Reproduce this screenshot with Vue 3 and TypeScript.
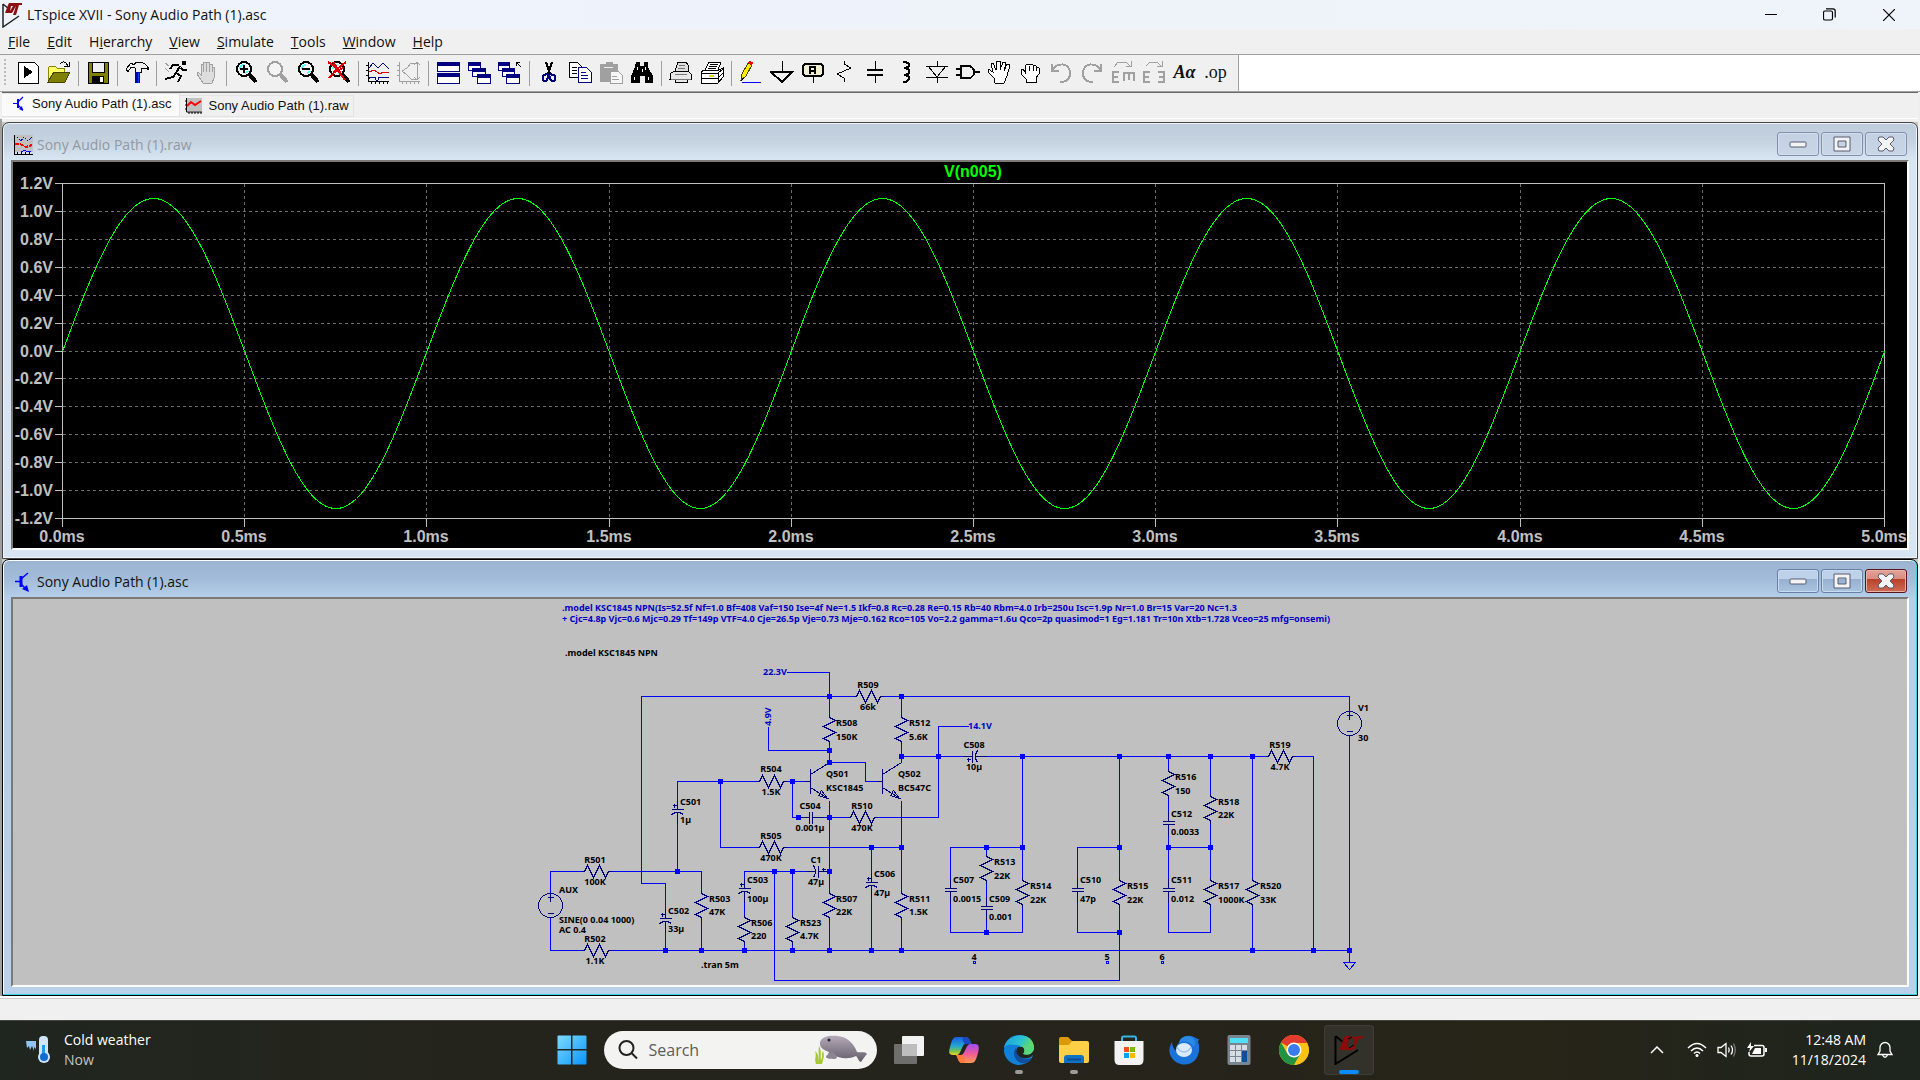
<script setup lang="ts">
interface Part { d: string; s?: string; f?: string; w?: number }
interface Tool { name: string; parts: Part[]; sep?: boolean }

const K = '#000'
const G = '#a0a0a0'
const N = '#000080'

const fistPath = 'M8 22 V19 L3 14 V10 L5 9 L7 12 V6 L9 4 L11 5 L13 4 L15 5 L17 5 L19 7 L21 8 V14 L18 18 V22 Z'
const lens = (c: string): Part[] => [
  { d: 'M3 9 a7 7 0 1 1 14 0 a7 7 0 1 1 -14 0', s: c, f: '#f4f4f4', w: 2 },
  { d: 'M15 14 L22 22', s: c, w: 4 },
]
const cyan: Part = { d: 'M6 9 A4 4 0 0 1 10 5 M14 11 A4 4 0 0 1 11 13', s: '#5ff', w: 2 }
const frameBox = (x: number, y: number, w: number, h: number): Part[] => [
  { d: `M${x} ${y} h${w} v${h} h-${w} Z`, s: N, f: '#fff' },
  { d: `M${x} ${y} h${w} v3 h-${w} Z`, s: N, f: N },
]
const cascade = [...frameBox(1, 2, 12, 8), ...frameBox(5, 8, 13, 8), ...frameBox(10, 14, 13, 9)]

const tools: Tool[] = [
  { name: 'New schematic', parts: [{ d: 'M2 2 h16 l4 4 v17 h-20 Z', s: K, f: '#fff' }, { d: 'M8 6 L17 12 L8 18 Z', f: K }] },
  { name: 'Open', parts: [{ d: 'M1 21 V8 L3 6 H8 L10 8 H17 V12 H7 Z', s: '#880', f: '#ff6' }, { d: 'M1 22 L7 12 H23 L18 22 Z', s: '#440', f: '#808000' }, { d: 'M13 4 C16 0 19 2 21 6 M17 6 H22 V2', s: K }] },
  { name: 'Save', sep: true, parts: [{ d: 'M2 2 H22 V23 H2 Z', s: K, f: '#808000' }, { d: 'M6 2 H18 V12 H6 Z', s: K, f: '#f0f0f0' }, { d: 'M6 16 H18 V23 H6 Z', f: K }, { d: 'M14 17 h3 v5 h-3 Z', f: '#fff' }] },
  { name: 'Control panel', sep: true, parts: [{ d: 'M1 9 L6 3 L9 5 L11 2 L15 2 C20 3 23 6 24 10 L21 8 L16 8 V12 H10 V8 L6 7 L3 12 Z', s: K, f: '#eee' }, { d: 'M10 12 H15 V23 H10 Z', f: '#0000a8' }, { d: 'M13 13 V23', s: '#04f' }] },
  { name: 'Run', sep: true, parts: [{ d: 'M18 1 h4 v4 h-4 Z', f: K }, { d: 'M16 6 L12 13 L17 16 L14 22', s: K, w: 2 }, { d: 'M15 5 L9 5 L6 9 M17 8 L19 10 L23 10 M12 13 L9 17 L1 19', s: K, w: 2 }, { d: 'M1 3 L5 6 M1 8 L5 12', s: G }] },
  { name: 'Halt', parts: [{ d: 'M8 23 L2 14 L3 12 L6 15 V4 L8 4 V11 V2 L11 2 V11 V2 L14 2 V11 V4 L17 4 V12 V7 L19 7 V18 L17 23 Z', s: G, f: '#ddd' }, { d: 'M8 4 V12 M11 2 V12 M14 3 V12', s: G }] },
  { name: 'Zoom area', sep: true, parts: [...lens(K), cyan, { d: 'M6 9 H14 M10 5 V13', s: K, w: 2 }] },
  { name: 'Pan', parts: [...lens(G)] },
  { name: 'Zoom back', parts: [...lens(K), cyan, { d: 'M6 9 H14', s: K, w: 2 }] },
  { name: 'Zoom full extents', parts: [...lens(K), cyan, { d: 'M1 2 L7 6 L18 20 M19 2 L10 9 L2 18 M6 2 L14 14 M16 8 L6 13', s: '#e00000', w: 2 }] },
  { name: 'Autorange', sep: true, parts: [{ d: 'M2 2 V21 H23 M5 21 V24 M9 21 V24 M13 21 V24 M17 21 V24 M21 21 V24 M0 5 H2 M0 10 H2 M0 15 H2', s: K }, { d: 'M3 8 L7 3 L12 8 L17 3 L23 9', s: N }, { d: 'M3 12 L8 10 L14 14 L17 12 L23 13', s: '#e00000' }, { d: 'M3 19 V17 H9 L10 20 H12 L13 17 H23', s: N }] },
  { name: 'Mark data', parts: [{ d: 'M2 2 V21 H23 M5 21 V24 M9 21 V24 M13 21 V24 M17 21 V24 M21 21 V24 M0 5 H2 M0 10 H2 M0 15 H2', s: G }, { d: 'M14 3 H20 M10 8 L14 3 M5 11 L10 8 M5 11 L10 15 M10 15 L14 19 H20 M20 2 V20 M17 5 L20 2 L23 5 M17 17 L20 20 L23 17', s: G }] },
  { name: 'Tile windows', sep: true, parts: [...frameBox(1, 2, 22, 9), ...frameBox(1, 13, 22, 10)] },
  { name: 'Cascade windows', parts: cascade },
  { name: 'Close windows', parts: [...frameBox(0, 2, 11, 8), ...frameBox(4, 8, 12, 8), ...frameBox(8, 14, 13, 9), { d: 'M23 7 L18 2 M18 6 V2 H22', s: K }] },
  { name: 'Cut', sep: true, parts: [{ d: 'M9 2 L13 14 M15 2 L11 14', s: K, w: 2 }, { d: 'M11 13 L8 15 C5 15 5 21 8 21 C11 21 11 18 11 14 M13 14 L16 15 C19 15 19 21 16 21 C13 21 13 18 12 14', s: N, w: 2 }] },
  { name: 'Copy', parts: [{ d: 'M1 2 H9 L13 6 V17 H1 Z', s: K, f: '#fff' }, { d: 'M4 7 H9 M4 10 H9 M4 13 H9', s: K }, { d: 'M10 7 H18 L23 12 V22 H10 Z', s: N, f: '#fff' }, { d: 'M13 12 H18 M13 15 H20 M13 18 H20', s: N }] },
  { name: 'Paste', parts: [{ d: 'M1 4 H7 V2 H13 V4 H18 V21 H1 Z', s: G, f: G }, { d: 'M5 7 H14', s: '#eee' }, { d: 'M11 11 H19 L23 15 V23 H11 Z', s: G, f: '#f6f6f6' }, { d: 'M13 16 H18 M13 19 H20', s: G }] },
  { name: 'Find', parts: [{ d: 'M6 2 h4 v4 h4 v-4 h4 v5 L23 16 V23 H15 V16 H10 V23 H1 V16 L5 7 Z', f: K }, { d: 'M7 7 V10 M15 7 V10 M4 17 V20 M18 17 V20 M12 9 V12', s: '#fff' }] },
  { name: 'Print preview', sep: true, parts: [{ d: 'M6 11 L9 2 H17 L19 5 V11', s: K, f: '#ddd' }, { d: 'M2 13 L6 11 H19 L22 14 V19 H18 V22 H6 V19 H1 Z', s: K, f: '#e8e8e8' }, { d: 'M2 19 H22 M10 5 H16 M9 8 H16 M6 14 H18', s: '#777' }] },
  { name: 'Print', parts: [{ d: 'M5 10 L9 2 H21 L18 10', s: K, f: '#fff' }, { d: 'M10 4 H18 M9 6 H17 M8 8 H16', s: K }, { d: 'M1 12 L4 10 H19 L23 8 V17 L18 23 H1 Z', s: K, f: '#fff' }, { d: 'M1 13 H18 V23 M18 13 L23 9 M1 18 H18 L23 13', s: K }, { d: 'M9 16 H14', s: '#dd0', w: 2 }] },
  { name: 'Draw wire', sep: true, parts: [{ d: 'M2 20 L3 14 L9 3 L13 5 L7 16 Z', s: '#440', f: '#ffee00' }, { d: 'M9 3 L10 1 L14 2 L13 6 Z', f: '#f00' }, { d: 'M2 22 L3 18 L5 18 Z', f: K }, { d: 'M3 22 H22', s: '#00f' }] },
  { name: 'Ground', parts: [{ d: 'M12 1 V12', s: K }, { d: 'M1 12 H22 L12 22 Z', s: K, w: 2 }] },
  { name: 'Label net', parts: [{ d: 'M4 4 H20 L22 6 V14 L20 16 H4 L2 14 V6 Z', s: K, f: '#f0f0d0', w: 2 }, { d: 'M9 14 V7 H14 V14 M9 11 H14', s: K, w: 2 }, { d: 'M12 17 V23', s: K }] },
  { name: 'Resistor', parts: [{ d: 'M12 1 V4 L19 8 L5 14 L12 18 V22', s: K }] },
  { name: 'Capacitor', parts: [{ d: 'M12 1 V9 M12 15 V23', s: K }, { d: 'M4 10 H20 M4 15 H20', s: K, w: 2 }] },
  { name: 'Inductor', parts: [{ d: 'M9 2 H12 L15 4 V6 L12 8 H10 M12 8 L15 10 V13 L12 15 H10 M12 15 L15 17 V19 L12 22 H9', s: K, w: 2 }] },
  { name: 'Diode', parts: [{ d: 'M12 1 V6 M1 6 H23 M3 6 L12 17 L21 6 M1 17 H23 M12 17 V23', s: K }] },
  { name: 'Component', parts: [{ d: 'M5 6 H12 C20 6 20 18 12 18 H5 Z M0 9 H5 M0 15 H5 M18 12 H24', s: K, w: 2 }] },
  { name: 'Move', parts: [{ d: 'M8 23 L7 18 L1 12 L1 9 L6 12 L4 4 L6 3 L9 10 L10 1 L13 1 L13 10 L16 2 L19 3 L17 11 L20 4 L23 5 L20 16 L17 23 Z', s: K, f: '#fff' }] },
  { name: 'Drag', parts: [{ d: fistPath, s: K, f: '#fff' }, { d: 'M11 6 V11 M15 6 V11 M18 7 V11', s: K }] },
  { name: 'Undo', parts: [{ d: 'M3 4 V11 H10 M3 11 C7 2 21 2 21 13 C21 19 17 22 11 22', s: G, w: 2 }] },
  { name: 'Redo', parts: [{ d: 'M21 4 V11 H14 M21 11 C17 2 3 2 3 13 C3 19 7 22 13 22', s: G, w: 2 }] },
  { name: 'Rotate', parts: [{ d: 'M3 7 L7 2 H15 L19 6 M15 6 H20 V1', s: G }, { d: 'M8 12 H2 V22 H8 M2 17 H7 M13 21 V13 H23 V21 M18 13 V20', s: G, w: 2 }] },
  { name: 'Mirror', parts: [{ d: 'M4 6 L8 2 H15 L19 6 M15 6 H20 V1', s: G }, { d: 'M8 12 H2 V22 H8 M2 17 H7 M16 12 H22 V22 H16 M22 17 H17', s: G, w: 2 }] },
  { name: 'Text', parts: [] },
  { name: 'SPICE directive', parts: [] },
]
const glyph: Record<string, string> = { Text: 'Aα', 'SPICE directive': '.op' }

const menus: [string, string, string][] = [
  ['', 'F', 'ile'], ['', 'E', 'dit'], ['H', 'i', 'erarchy'], ['', 'V', 'iew'],
  ['', 'S', 'imulate'], ['', 'T', 'ools'], ['', 'W', 'indow'], ['', 'H', 'elp'],
]

/* waveform pane */
const X0 = 62, X1 = 1884, Y0 = 183, Y1 = 518
const volts = Array.from({ length: 13 }, (_, i) => ({
  y: Math.round(Y0 + (i * (Y1 - Y0)) / 12),
  text: (1.2 - i * 0.2).toFixed(1).replace('-0.0', '0.0') + 'V',
}))
const times = Array.from({ length: 11 }, (_, i) => ({
  x: Math.round(X0 + (i * (X1 - X0)) / 10),
  text: (i * 0.5).toFixed(1) + 'ms',
}))
const trace = Array.from({ length: 912 }, (_, i) => {
  const a = (i / 911) * 10 * Math.PI
  const y = 351 - 155 * Math.sin(a) + (1 - Math.cos(2 * a))
  return `${(X0 + (i / 911) * (X1 - X0)).toFixed(1)},${y.toFixed(1)}`
}).join(' ')

/* schematic */
const wires = [
  'M786 672 H829 V714 M829 744 V762', 'M853 696 H641 V883 H665 V908', 'M883 696 H1349 V711',
  'M901 696 V714 M901 744 V762', 'M768 726 V750 H829', 'M829 762 H865 V781 H877',
  'M901 756 H962 M986 756 H1265', 'M968 726 H938 V817 H877', 'M829 817 H847 M823 817 H829',
  'M792 781 V817 H798', 'M829 800 V890 M829 920 V950', 'M901 800 V890 M901 920 V950',
  'M677 799 V781 H756 M677 823 V871', 'M786 781 H804', 'M720 781 V847 H756 M786 847 H901',
  'M550 893 V871 H581 M611 871 H701 V890 M701 920 V950', 'M550 917 V950 H581 M611 950 H1349',
  'M805 871 H744 V878 M744 902 V914 M744 944 V950', 'M871 847 V872 M871 896 V950', 'M665 932 V950',
  'M774 871 V980 H1119 V907', 'M792 871 V914 M792 944 V950', 'M1022 756 V877 M1022 907 V932 H950 V902',
  'M1022 847 H950 V878', 'M986 847 V853 M986 883 V896 M986 920 V932', 'M1119 847 H1077 V878 M1077 902 V932 H1119',
  'M1119 756 V877', 'M1168 756 V768 M1168 798 V811 M1168 835 V878 M1168 902 V932 H1210 V907',
  'M1168 847 H1210', 'M1210 756 V793 M1210 823 V877', 'M1252 756 V877 M1252 907 V950',
  'M1295 756 H1313 V950', 'M1349 735 V962', 'M1343 962 H1355 L1349 969 Z',
].join(' ')

const resV = ([x, y]: number[]) => `M${x} ${y} v3 l6 3 l-12 6 l12 6 l-12 6 l6 3 v3`
const resH = ([x, y]: number[]) => `M${x} ${y} h3 l3 -6 l6 12 l6 -12 l6 12 l3 -6 h3`
const capV = ([x, y]: number[]) => `M${x} ${y - 12} V${y - 2} M${x - 6} ${y - 2} h12 M${x - 6} ${y + 1} h12 M${x} ${y + 1} V${y + 12}`
const polV = ([x, y]: number[]) => `M${x} ${y - 12} V${y - 2} M${x - 6} ${y - 2} h12 M${x - 6} ${y + 3} q6 -4 12 0 M${x} ${y + 1} V${y + 12} M${x - 5} ${y - 6} h4 M${x - 3} ${y - 8} v4`
const npn = ([x, y]: number[]) => `M${x - 25} ${y} h6 M${x - 19} ${y - 13} v25 M${x - 19} ${y - 7} L${x} ${y - 19} M${x - 19} ${y + 6} L${x} ${y + 18} M${x - 8} ${y + 9} L${x - 2} ${y + 17} L${x - 11} ${y + 14} Z`
const source = ([x, y]: number[]) => `M${x - 12} ${y} a12 12 0 1 1 24 0 a12 12 0 1 1 -24 0 M${x - 3} ${y - 8} h6 M${x} ${y - 12} v8 M${x - 3} ${y + 8} h6`

const symbols = [
  ...[[829, 714], [901, 714], [701, 890], [829, 890], [901, 890], [744, 914], [792, 914], [1168, 768], [1210, 793], [986, 853], [1022, 877], [1119, 877], [1210, 877], [1252, 877]].map(resV),
  ...[[853, 696], [756, 781], [847, 817], [756, 847], [581, 871], [581, 950], [1265, 756]].map(resH),
  ...[[1168, 823], [950, 890], [986, 908], [1077, 890], [1168, 890]].map(capV),
  ...[[677, 811], [665, 920], [744, 890], [871, 884]].map(polV),
  ...[[829, 781], [901, 781]].map(npn),
  ...[[550, 905], [1349, 723]].map(source),
  'M798 817 H809 M809 811 v12 M812 811 v12 M812 817 H823',
  'M805 871 H815 M813 865 q4 6 0 12 M818 865 v12 M818 871 H829 M821 869 h4 M823 867 v4',
  'M962 756 H972 M972 750 v12 M977 750 q-4 6 0 12 M975 756 H986 M966 759 h4 M968 757 v4',
].join(' ')

const joints = [
  [829, 696], [901, 696], [829, 750], [829, 762], [901, 756], [938, 756], [720, 781], [792, 781], [798, 817], [829, 817],
  [871, 847], [901, 847], [677, 871], [774, 871], [792, 871], [829, 871], [665, 950], [701, 950], [744, 950], [792, 950],
  [829, 950], [871, 950], [901, 950], [1022, 756], [1119, 756], [1168, 756], [1210, 756], [1252, 756], [986, 847], [1022, 847],
  [1119, 847], [1168, 847], [1210, 847], [986, 932], [1119, 932], [1252, 950], [1313, 950], [1349, 950],
]
const flags = [[974, 962], [1107, 962], [1162, 962]]

type Label = [number, number, string]
const leftLabels: Label[] = [
  [565, 656, '.model KSC1845 NPN'], [836, 726, 'R508'], [836, 740, '150K'], [909, 726, 'R512'], [909, 740, '5.6K'],
  [826, 777, 'Q501'], [826, 791, 'KSC1845'], [898, 777, 'Q502'], [898, 791, 'BC547C'], [680, 805, 'C501'], [680, 823, '1µ'],
  [559, 893, 'AUX'], [559, 923, 'SINE(0 0.04 1000)'], [559, 933, 'AC 0.4'], [668, 914, 'C502'], [668, 932, '33µ'],
  [709, 902, 'R503'], [709, 915, '47K'], [747, 883, 'C503'], [747, 902, '100µ'], [751, 926, 'R506'], [751, 939, '220'],
  [800, 926, 'R523'], [800, 939, '4.7K'], [836, 902, 'R507'], [836, 915, '22K'], [874, 877, 'C506'], [874, 896, '47µ'],
  [909, 902, 'R511'], [909, 915, '1.5K'], [701, 968, '.tran 5m'], [1175, 780, 'R516'], [1175, 794, '150'],
  [1171, 817, 'C512'], [1171, 835, '0.0033'], [1218, 805, 'R518'], [1218, 818, '22K'], [1358, 711, 'V1'], [1358, 741, '30'],
  [953, 883, 'C507'], [953, 902, '0.0015'], [994, 865, 'R513'], [994, 879, '22K'], [989, 902, 'C509'], [989, 920, '0.001'],
  [1030, 889, 'R514'], [1030, 903, '22K'], [1080, 883, 'C510'], [1080, 902, '47p'], [1127, 889, 'R515'], [1127, 903, '22K'],
  [1171, 883, 'C511'], [1171, 902, '0.012'], [1218, 889, 'R517'], [1218, 903, '1000K'], [1260, 889, 'R520'], [1260, 903, '33K'],
]
const midLabels: Label[] = [
  [868, 688, 'R509'], [868, 710, '66k'], [771, 772, 'R504'], [771, 795, '1.5K'], [810, 809, 'C504'], [810, 831, '0.001µ'],
  [862, 809, 'R510'], [862, 831, '470K'], [771, 839, 'R505'], [771, 861, '470K'], [595, 863, 'R501'], [595, 885, '100K'],
  [595, 942, 'R502'], [595, 964, '1.1K'], [816, 863, 'C1'], [816, 885, '47µ'], [974, 748, 'C508'], [974, 770, '10µ'],
  [1280, 748, 'R519'], [1280, 770, '4.7K'], [974, 960, '4'], [1107, 960, '5'], [1162, 960, '6'],
]
const blueLabels: Label[] = [
  [562, 611, '.model KSC1845 NPN(Is=52.5f Nf=1.0 Bf=408 Vaf=150 Ise=4f Ne=1.5 Ikf=0.8 Rc=0.28 Re=0.15 Rb=40 Rbm=4.0 Irb=250u Isc=1.9p Nr=1.0 Br=15 Var=20 Nc=1.3'],
  [562, 622, '+ Cjc=4.8p Vjc=0.6 Mjc=0.29 Tf=149p VTF=4.0 Cje=26.5p Vje=0.73 Mje=0.162 Rco=105 Vo=2.2 gamma=1.6u Qco=2p quasimod=1 Eg=1.181 Tr=10n Xtb=1.728 Vceo=25 mfg=onsemi)'],
  [763, 675, '22.3V'], [968, 729, '14.1V'],
]
</script>

<template>
  <div class="desktop">
    <header class="titlebar">
      <svg class="app-icon" width="20" height="26" viewBox="0 0 20 26">
        <path d="M1 2 V25 L17 14 M1 2 L7 7" fill="none" stroke="#222" stroke-width="1.5" />
        <path d="M7 1 H20 V3 H17 L14 13 H11 L14 4 L10 11 H3 L6 3 Z M9 4 L8 9 L11 4 Z" fill="#8b1010" fill-rule="evenodd" />
      </svg>
      <span class="app-title">LTspice XVII - Sony Audio Path (1).asc</span>
      <button class="sys" aria-label="Minimize"><svg width="12" height="12" viewBox="0 0 12 12"><path d="M0 5.5 H12" stroke="#000" /></svg></button>
      <button class="sys" aria-label="Restore"><svg width="13" height="13" viewBox="0 0 13 13" fill="none" stroke="#000"><rect x=".5" y="3" width="9" height="9" rx="1.5" stroke-width="1.2" /><path d="M3 .8 H10 Q12.2 .8 12.2 3 V9.5" stroke-width="1.2" /></svg></button>
      <button class="sys" aria-label="Close"><svg width="12" height="12" viewBox="0 0 12 12"><path d="M0 0 L12 12 M12 0 L0 12" stroke="#000" stroke-width="1.2" /></svg></button>
    </header>

    <nav class="menubar">
      <button v-for="m in menus" :key="m.join('')" class="menu">{{ m[0] }}<u>{{ m[1] }}</u>{{ m[2] }}</button>
    </nav>

    <div class="toolrow">
      <div class="toolbar">
        <span class="grip"></span>
        <template v-for="t in tools" :key="t.name">
          <span v-if="t.sep" class="sep"></span>
          <button class="tool" :aria-label="t.name">
            <span v-if="glyph[t.name]" :class="t.name === 'Text' ? 'aa' : 'op'">{{ glyph[t.name] }}</span>
            <svg v-else width="24" height="24" viewBox="0 0 24 24" shape-rendering="crispEdges">
              <path v-for="(p, i) in t.parts" :key="i" :d="p.d" :fill="p.f ?? 'none'" :stroke="p.s ?? 'none'" :stroke-width="p.w ?? 1" />
            </svg>
          </button>
        </template>
      </div>
    </div>

    <div class="tabs">
      <button class="tab active">
        <svg width="11" height="16" viewBox="0 0 11 16" fill="none" stroke="#00f"><path d="M0 7.5 H5 M10 1 L5 6 M5 9 L10 14" stroke-width="1.2" /><path d="M5 3 V12" stroke-width="2" /><path d="M10 15 L6 13 L9 10 Z" fill="#00f" stroke="none" /></svg>
        Sony Audio Path (1).asc
      </button>
      <button class="tab">
        <svg width="17" height="16" viewBox="0 0 17 16"><rect x="2" width="15" height="13" fill="#c0c0c0" /><path d="M1.5 0 V14 H17 M4 14 v2 M7 14 v2 M10 14 v2 M13 14 v2 M16 14 v2 M0 3 h2 M0 7 h2 M0 11 h2" stroke="#000" fill="none" /><path d="M2 8 L6 4 L10 7 L16 3" stroke="#f00" stroke-width="2" fill="none" /></svg>
        Sony Audio Path (1).raw
      </button>
    </div>

    <main class="mdi">
      <section class="win">
        <div class="caption">
          <svg width="20" height="20" viewBox="0 0 20 20" shape-rendering="crispEdges"><rect x="1" width="19" height="17" fill="#c0c0c0" /><path d="M1 0 V19 H20 M4 17 v3 M8 17 v3 M12 17 v3 M16 17 v3" stroke="#000" fill="none" /><path d="M4 2 L8 6 L11 2 L15 6 L19 2" stroke="#00f" fill="none" stroke-dasharray="2 1" /><path d="M2 9 L7 9 L13 12 L19 10" stroke="#f00" stroke-width="2" fill="none" stroke-dasharray="4 1" /><path d="M8 17 L12 15 L14 17 L18 16" stroke="#00f" fill="none" /></svg>
          <span class="caption-text dim">Sony Audio Path (1).raw</span>
          <span class="caption-buttons">
            <button class="cb" aria-label="Minimize plot"><svg width="18" height="18" viewBox="0 0 18 18"><rect x="1" y="7" width="16" height="5" rx="1" fill="#f4f4f4" stroke="#565b73" /></svg></button>
            <button class="cb" aria-label="Maximize plot"><svg width="18" height="18" viewBox="0 0 18 18"><path d="M1 2 H17 V16 H1 Z M5 6 V12 H13 V6 Z" fill="#f4f4f4" stroke="#565b73" fill-rule="evenodd" /></svg></button>
            <button class="cb" aria-label="Close plot"><svg width="18" height="18" viewBox="0 0 18 18"><path d="M2 2 H6 L9 5 L12 2 H16 L17 5 L13 9 L17 13 L16 16 H12 L9 13 L6 16 H2 L1 13 L5 9 L1 5 Z" fill="#f4f4f4" stroke="#565b73" /></svg></button>
          </span>
        </div>
        <div class="client">
          <svg class="plot" viewBox="13 162 1894 386">
            <g fill="none" shape-rendering="crispEdges" transform="translate(.5 .5)">
              <g stroke="#6c6c6c" stroke-dasharray="3 3">
                <path v-for="v in volts.slice(1, 12)" :key="v.text" :d="`M${X0} ${v.y} H${X1}`" />
                <path v-for="t in times.slice(1, 10)" :key="t.text" :d="`M${t.x} ${Y0} V${Y1}`" />
              </g>
              <g stroke="#c0c0c0">
                <path :d="`M${X0} ${Y0} H${X1} V${Y1} H${X0} Z`" />
                <path v-for="v in volts" :key="v.text" :d="`M54 ${v.y} H${X0}`" />
                <path v-for="t in times" :key="t.text" :d="`M${t.x} ${Y1} v8`" />
              </g>
              <polyline :points="trace" stroke="#00ff00" />
            </g>
            <g class="axis-text">
              <text v-for="v in volts" :key="v.text" x="53" :y="v.y + 6" text-anchor="end">{{ v.text }}</text>
              <text v-for="t in times" :key="t.text" :x="t.x" y="542" text-anchor="middle">{{ t.text }}</text>
              <text class="trace-name" x="973" y="177" text-anchor="middle">V(n005)</text>
            </g>
          </svg>
        </div>
      </section>

      <section class="win front">
        <div class="caption">
          <svg width="20" height="20" viewBox="0 0 20 20" fill="none" stroke="#00f"><path d="M2 9.5 H8 M15 1 L8 7 M8 12 L14 18" stroke-width="1.5" /><path d="M8 4 V15" stroke-width="3" /><path d="M16 20 L9 17 L14 13 Z" fill="#00f" stroke="none" /></svg>
          <span class="caption-text">Sony Audio Path (1).asc</span>
          <span class="caption-buttons">
            <button class="cb" aria-label="Minimize schematic"><svg width="18" height="18" viewBox="0 0 18 18"><rect x="1" y="7" width="16" height="5" rx="1" fill="#f4f4f4" stroke="#565b73" /></svg></button>
            <button class="cb" aria-label="Maximize schematic"><svg width="18" height="18" viewBox="0 0 18 18"><path d="M1 2 H17 V16 H1 Z M5 6 V12 H13 V6 Z" fill="#f4f4f4" stroke="#565b73" fill-rule="evenodd" /></svg></button>
            <button class="cb close" aria-label="Close schematic"><svg width="18" height="18" viewBox="0 0 18 18"><path d="M2 2 H6 L9 5 L12 2 H16 L17 5 L13 9 L17 13 L16 16 H12 L9 13 L6 16 H2 L1 13 L5 9 L1 5 Z" fill="#f4f4f4" stroke="#565b73" /></svg></button>
          </span>
        </div>
        <div class="client">
          <svg class="schematic" viewBox="13 599 1894 386">
            <g fill="none" shape-rendering="crispEdges" transform="translate(.5 .5)">
              <path :d="wires" stroke="#0000ff" />
              <path :d="symbols" stroke="#000080" />
              <rect v-for="f in flags" :key="f[0]" :x="f[0] - 1" :y="f[1] - 1" width="2" height="2" stroke="#0000ff" />
            </g>
            <rect v-for="(j, i) in joints" :key="i" :x="j[0] - 2" :y="j[1] - 2" width="5" height="5" fill="#0000ff" />
            <g class="net-text">
              <text v-for="(l, i) in leftLabels" :key="i" :x="l[0]" :y="l[1]">{{ l[2] }}</text>
              <text v-for="(l, i) in midLabels" :key="i" :x="l[0]" :y="l[1]" text-anchor="middle">{{ l[2] }}</text>
              <g fill="#0000c8">
                <text v-for="(l, i) in blueLabels" :key="i" :x="l[0]" :y="l[1]">{{ l[2] }}</text>
                <text transform="translate(771 726) rotate(-90)">4.9V</text>
              </g>
            </g>
          </svg>
        </div>
      </section>
    </main>
    <div class="statusbar"></div>

    <footer class="taskbar">
      <button class="weather">
        <svg width="25" height="30" viewBox="0 0 25 30">
          <path d="M0 6 H10 V14 L8 12 L8 16 L6 11 L4 15 L3 11 L1 13 Z" fill="#8fc4f5" />
          <rect x="13" y="1" width="9" height="22" rx="4" fill="#cfe4fa" /><circle cx="18" cy="22" r="6" fill="#cfe4fa" />
          <path d="M17.5 10 V22" stroke="#1e9be8" stroke-width="3" /><circle cx="18" cy="22" r="4" fill="#0f6cd0" />
        </svg>
        <span class="weather-text"><span>Cold weather</span><span class="now">Now</span></span>
      </button>

      <div class="dock">
        <button class="app" aria-label="Start">
          <svg width="30" height="30" viewBox="0 0 30 30"><defs><linearGradient id="win" x1="0" y1="0" x2="1" y2="1" gradientUnits="objectBoundingBox"><stop offset="0" stop-color="#7ddcff" /><stop offset="1" stop-color="#0a93fb" /></linearGradient></defs><path d="M.5 1.5 q0 -1 1 -1 H14 V14 H.5 Z M15.5 .5 H28.5 q1 0 1 1 V14 H15.5 Z M.5 15.5 H14 V29.5 H1.5 q-1 0 -1 -1 Z M15.5 15.5 H29.5 V28.5 q0 1 -1 1 H15.5 Z" fill="url(#win)" /></svg>
        </button>
        <label class="search">
          <svg width="20" height="20" viewBox="0 0 20 20" fill="none" stroke="#222" stroke-width="2"><circle cx="8.5" cy="8" r="7" /><path d="M13.5 13 L19 18.5" /></svg>
          <input type="text" placeholder="Search" aria-label="Search" />
          <svg width="54" height="32" viewBox="0 0 54 32">
            <defs><linearGradient id="man" x1="0" y1="0" x2="0" y2="1"><stop offset="0" stop-color="#b5aab9" /><stop offset="1" stop-color="#625c69" /></linearGradient></defs>
            <path d="M6 8 C8 2 16 1 24 2 C34 3 40 10 43 18 C46 19 51 17 53 20 C51 22 49 25 47 28 C45 28 44 24 42 22 C34 26 24 24 20 21 L18 21 C20 24 15 26 12 23 C14 22 14 20 15 18 C10 16 5 14 6 8 Z" fill="url(#man)" />
            <circle cx="15" cy="6" r="1.5" fill="#222" /><path d="M17 18 C22 19 25 24 21 25 C17 25 12 24 12 22 Z" fill="#8d8593" />
            <path d="M2 30 C0 24 3 22 1 17 C5 20 4 24 5 27 C5 22 4 18 5 12 C8 17 6 22 7 26 C9 23 7 20 9 17 C11 22 9 26 8 30 Z" fill="#a5c832" />
          </svg>
        </label>
        <button class="app" aria-label="Task view">
          <svg width="32" height="30" viewBox="0 0 32 30"><rect x="9" y="1" width="22" height="20" rx="1" fill="#f2f2f2" /><rect x="1" y="9" width="23" height="20" rx="1" fill="#6e6e6c" /><rect x="9" y="9" width="15" height="12" fill="#bdbdbd" /></svg>
        </button>
        <button class="app" aria-label="Copilot">
          <svg width="32" height="30" viewBox="0 0 32 30">
            <defs>
              <linearGradient id="ca" x1="0" y1="0" x2="0" y2="1"><stop offset="0" stop-color="#1a5fe0" /><stop offset=".5" stop-color="#22a6d6" /><stop offset=".8" stop-color="#7cc646" /><stop offset="1" stop-color="#f2d02a" /></linearGradient>
              <linearGradient id="cb" x1="0" y1="0" x2="0" y2="1"><stop offset="0" stop-color="#a04cf0" /><stop offset=".5" stop-color="#ee5a9c" /><stop offset="1" stop-color="#ff9a4a" /></linearGradient>
            </defs>
            <path d="M18 2 C22 2 22 8 24 9 H17 C14 9 13 20 9 20 H5 C0 20 1 16 2 12 C4 5 5 2 9 2 Z" fill="url(#ca)" />
            <path d="M14 28 C10 28 10 22 8 20 H13 C17 20 18 9 22 9 H27 C32 9 31 14 30 18 C28 25 27 28 23 28 Z" fill="url(#cb)" />
            <path d="M14 2 H18 C22 2 22 8 24 9 H17 C15 8 15 4 14 2 Z" fill="#1c48c4" /><path d="M8 20 C10 22 10 28 14 28 H16 C19 26 14 21 15 20 Z" fill="#ff7a38" />
          </svg>
        </button>
        <button class="app running" aria-label="Edge">
          <svg width="30" height="30" viewBox="0 0 30 30">
            <defs><linearGradient id="ed" x1="0" y1="0" x2="1" y2=".4"><stop offset="0" stop-color="#1c9ce0" /><stop offset=".6" stop-color="#2bc3d2" /><stop offset="1" stop-color="#6fe052" /></linearGradient></defs>
            <circle cx="15" cy="15" r="15" fill="#1380d8" />
            <path d="M0 13 C2 -3 30 -5 30 13 C30 19 24 21 19 19 C22 15 18 10 12 10 C7 9 2 9 0 13 Z" fill="url(#ed)" />
            <path d="M12 13 C7 19 12 30 22 28 C25 27 27 25 28 23 C22 26 13 23 12 13 Z" fill="#0e4f9e" />
            <path d="M14 12 C11 15 12 21 19 23 C24 24 27 22 29 20 L31 25 L31 17 L30 14 C29 18 25 20 19 19 C21 17 21 14 19 12 Z" fill="#22231c" />
            <path d="M30 10 C31 19 24 21 19 19 C22 16 20 12 17 11 Z" fill="#58d67e" />
          </svg>
        </button>
        <button class="app running" aria-label="File Explorer">
          <svg width="30" height="28" viewBox="0 0 30 28"><path d="M0 3 q0 -2 2 -2 H9 L13 5 H20 V12 H0 Z" fill="#dd9a08" /><path d="M0 9 H10 L13 5 H28 q2 0 2 2 V25 q0 2 -2 2 H2 q-2 0 -2 -2 Z" fill="#ffcf48" /><path d="M5 27 V22 q0 -3 3 -3 H22 q3 0 3 3 V27 Z" fill="#0f72c4" /><path d="M8 23.5 H22" stroke="#0a4d92" stroke-width="2" /></svg>
        </button>
        <button class="app" aria-label="Store">
          <svg width="30" height="30" viewBox="0 0 30 30"><path d="M8 7 V3 q0 -1.5 1.5 -1.5 H20.5 q1.5 0 1.5 1.5 V7" fill="none" stroke="#32b5e8" stroke-width="2" /><path d="M.5 6 H29.5 V25 q0 5 -5 5 H5.5 q-5 0 -5 -5 Z" fill="#f3f3f3" /><path d="M10 12 h5 v5 h-5 Z" fill="#f25022" /><path d="M16 12 h5 v5 h-5 Z" fill="#7fba00" /><path d="M10 18 h5 v5 h-5 Z" fill="#00a4ef" /><path d="M16 18 h5 v5 h-5 Z" fill="#ffb900" /></svg>
        </button>
        <button class="app" aria-label="Thunderbird">
          <svg width="30" height="30" viewBox="0 0 30 30"><path d="M3 7 C0 12 -1 18 3 23 C8 31 21 32 27 24 C31 18 31 11 29 7 L30 4 C27 4 27 2 22 1 C16 0 11 3 10 8 C7 9 7 14 8 17 C5 14 3 11 3 7 Z" fill="#1973d8" /><path d="M10 8 C11 3 16 0 22 2 C26 4 27 8 25 12 C22 7 15 5 10 8 Z" fill="#2b8ae6" /><ellipse cx="15" cy="15" rx="8" ry="7" fill="#dcebfc" /><path d="M8 12 C10 16 13 17 15 17 C17 17 20 16 22 12" stroke="#9cc4f0" stroke-width="1.5" fill="none" /></svg>
        </button>
        <button class="app" aria-label="Calculator">
          <svg width="24" height="30" viewBox="0 0 24 30"><rect x=".5" width="23" height="30" rx="2" fill="#7b8590" /><rect x="3" y="3" width="18" height="5" fill="#4fe0f8" /><path d="M3 10 h5 v5 h-5 Z M9 10 h5 v5 h-5 Z M15 10 h5 v5 h-5 Z M3 16 h5 v5 h-5 Z M9 16 h5 v5 h-5 Z M3 22 h5 v5 h-5 Z M9 22 h5 v5 h-5 Z" fill="#d6dde4" /><path d="M15 16 h5 v11 h-5 Z" fill="#0f4f95" /></svg>
        </button>
        <button class="app" aria-label="Chrome">
          <svg width="30" height="30" viewBox="0 0 30 30"><circle cx="15" cy="15" r="15" fill="#fbc116" /><path d="M15 15 L2 7.5 A15 15 0 0 1 28 7.5 Z M15 7.5 H28 L15 15 Z" fill="#e33b2e" /><path d="M2 7.5 A15 15 0 0 0 15 30 L21.5 18.8 L15 15 L8.5 18.8 Z" fill="#229342" /><path d="M15 8 H28 A15 15 0 0 1 15 30 L22 18 Z" fill="#fbc116" /><circle cx="15" cy="15" r="7.5" fill="#fff" /><circle cx="15" cy="15" r="6" fill="#3a7cec" /></svg>
        </button>
        <button class="app current" aria-label="LTspice">
          <svg width="30" height="30" viewBox="0 0 30 30"><path d="M1.5 1 V29 L24 15 M1.5 1 L9 7" fill="none" stroke="#000" stroke-width="2" /><path d="M11 1 H17 L13 12 L18 2 L30 1 L28 4 L25 3 L20 15 H5 L9 5 Z" fill="#8b0a0a" /><ellipse cx="17" cy="8" rx="3" ry="5" transform="rotate(25 17 8)" fill="#33322a" /><path d="M14 4 L18 2 M15 13 L20 10" stroke="#000" /></svg>
        </button>
      </div>

      <div class="tray">
        <button class="tb" aria-label="Hidden icons"><svg width="14" height="8" viewBox="0 0 14 8" fill="none" stroke="#fff" stroke-width="1.5"><path d="M1 7 L7 1 L13 7" /></svg></button>
        <button class="tb status-group" aria-label="Network, volume and battery">
          <svg width="20" height="16" viewBox="0 0 20 16" fill="none" stroke="#fff" stroke-width="1.5"><path d="M1 6 Q10 -3 19 6 M4 9 Q10 3 16 9 M7 11.5 Q10 8.5 13 11.5" /><circle cx="10" cy="13.5" r="1.5" fill="#fff" stroke="none" /></svg>
          <svg width="20" height="16" viewBox="0 0 20 16" fill="none" stroke="#fff" stroke-width="1.3"><path d="M1 5.5 H4 L9 1.5 V14.5 L4 10.5 H1 Z M11.5 5.5 Q13 8 11.5 10.5 M14 3.5 Q17 8 14 12.5" /><path d="M16.5 1.5 Q20 8 16.5 14.5" stroke="#777" /></svg>
          <svg width="20" height="16" viewBox="0 0 20 16"><path d="M7 3.5 H15 q2 0 2 2 V12 q0 2 -2 2 H4 q-2 0 -2 -2 V10" fill="none" stroke="#fff" stroke-width="1.5" /><path d="M8 6 H14 V12 H5 Z" fill="#fff" /><path d="M18 6 h2 v4 h-2 Z M4 0 L0 6 H3 L2 10 L7 4 H4 Z" fill="#fff" /></svg>
        </button>
        <button class="tb clock"><span>12:48 AM</span><span>11/18/2024</span></button>
        <button class="tb" aria-label="Notifications"><svg width="16" height="18" viewBox="0 0 16 18" fill="none" stroke="#fff" stroke-width="1.3"><path d="M1 13.5 L3 10 V6.5 A5 5 0 0 1 13 6.5 V10 L15 13.5 Z M5.5 14 Q8 18.5 10.5 14" /></svg></button>
      </div>
    </footer>
  </div>
</template>

<style>
body { background: #efefef; }
</style>

<style scoped>
.desktop {
  display: flex;
  flex-direction: column;
  min-height: 100vh;
  font: 14px/20px "Open Sans", "Noto Sans", sans-serif;
  color: #111;
}
svg { display: block; flex: none; }
button {
  margin: 0;
  padding: 0;
  border: 0;
  background: none;
  font: inherit;
  color: inherit;
}
.titlebar {
  display: flex;
  align-items: center;
  height: 29px;
  padding-left: 2px;
  background: linear-gradient(90deg, #eff3fc, #eef4f9);
}
.app-title { flex: 1; padding-left: 5px; }
.sys { display: flex; align-items: center; justify-content: center; width: 59px; height: 28px; }
.sys:last-child { margin-right: 2px; }
.menubar {
  display: flex;
  gap: 17px;
  height: 25px;
  padding-left: 8px;
  background: #f0f0f0;
  border-bottom: 1px solid #a0a0a0;
}
.toolrow { display: flex; background: #fff; border-bottom: 1px solid #a0a0a0; }
.toolbar {
  display: flex;
  align-items: center;
  height: 36px;
  padding-right: 7px;
  background: #f0f0f0;
  border-right: 1px solid #a0a0a0;
}
.grip { width: 2px; height: 28px; margin: 0 6px 0 4px; background: repeating-linear-gradient(#bbb 0 2px, #f0f0f0 2px 4px); }
.tool { display: flex; align-items: center; justify-content: center; width: 31px; height: 32px; padding-bottom: 2px; }
.sep { width: 1px; height: 25px; margin: 0 3px 0 4px; background: #a0a0a0; }
.aa { font: italic bold 18px/24px "Liberation Serif", serif; }
.op { font: 18px/24px "Liberation Serif", serif; }
.tabs {
  display: flex;
  align-items: flex-start;
  height: 25px;
  margin: 0 2px;
  border-top: 1px solid #696969;
  border-bottom: 1px solid #fff;
  background: #f0f0f0;
}
.tab {
  display: flex;
  align-items: center;
  gap: 6px;
  height: 22px;
  margin-top: 2px;
  padding: 0 4px 0 5px;
  border: 1px solid #e3e3e3;
  border-left: 0;
  font: 13px/20px "Liberation Sans", sans-serif;
}
.tab.active { height: 24px; margin-top: 0; padding: 0 8px 2px 11px; gap: 8px; background: #fafafa; }
.mdi {
  padding: 3px 2px 0 0;
  border-left: 2px solid #a0a0a0;
  background: #c9c6bd content-box;
}
.win {
  padding: 0 8px 8px;
  border: 1px solid #444;
  border-radius: 7px 7px 0 0;
  background: linear-gradient(#bfccdb, #c5d2e0 18px, #d7e4f2 36px);
  box-shadow: inset 0 0 0 1px #eef4fa;
}
.win.front {
  border-color: #000;
  background: linear-gradient(#99b4d1, #a2bbd8 18px, #b5cee9 38px, #b9d1ea);
  box-shadow: inset 0 -1px 0 #35d3e6, inset -1px 0 0 #35d3e6, inset 0 1px 0 #fff, inset 1px 0 0 #fff;
}
.caption { display: flex; align-items: center; height: 37px; padding: 8px 0 0 2px; box-sizing: border-box; }
.caption > svg { margin-bottom: 2px; }
.caption-text { flex: 1; padding: 0 0 2px 4px; }
.dim { color: #9299a2; }
.caption-buttons { display: flex; gap: 2px; margin-bottom: 3px; padding-right: 2px; }
.cb {
  display: flex;
  align-items: center;
  justify-content: center;
  width: 42px;
  height: 24px;
  box-sizing: border-box;
  border: 1px solid #8090b0;
  border-radius: 3px;
  background: linear-gradient(#c2d0e2, #c8d6e6);
  box-shadow: inset 0 0 0 1px #d3deeb;
}
.front .cb { background: linear-gradient(#bdd1e8 0 40%, #96afcf 40%, #a9c4e0); border-color: #6a7ea6; box-shadow: inset 0 0 0 1px #c9dbee; }
.front .cb.close { background: linear-gradient(#e3a39a 0, #d98d80 40%, #b8402a 40%, #cf6d55); border-color: #5a1420; box-shadow: inset 0 0 0 1px #e9b2a6; }
.client {
  border: 2px solid;
  border-color: #7b7875 #fff #fff #7b7875;
}
.plot { width: 100%; height: auto; background: #000; }
.schematic { width: 100%; height: auto; background: #c0c0c0; }
.axis-text { font: bold 16px "Liberation Sans", sans-serif; fill: #c0c0c0; }
.trace-name { fill: #00ff00; }
.net-text { font: bold 9px "Noto Sans", "Open Sans", sans-serif; }
.statusbar { flex: 1; min-height: 21px; border-top: 2px solid #fff; background: #f0f0f0; box-shadow: inset 0 1px 0 #ccc; }
.taskbar {
  display: grid;
  grid-template-columns: 1fr auto 1fr;
  align-items: center;
  height: 60px;
  padding-bottom: 2px;
  color: #fff;
  background: linear-gradient(90deg, #1f261f, #25241c 24%, #25241c 50%, #272418 80%, #1d251e);
  border-top: 1px solid #45463f;
  box-sizing: border-box;
}
.weather { display: flex; align-items: center; gap: 13px; padding-left: 26px; text-align: left; }
.weather-text { display: flex; flex-direction: column; }
.now { color: #c4c4c0; }
.dock { display: flex; align-items: center; padding-right: 2px; }
.app { position: relative; display: flex; align-items: center; justify-content: center; width: 55px; height: 50px; }
.app.running::after,
.app.current::after {
  content: "";
  position: absolute;
  bottom: 1px;
  left: 50%;
  width: 8px;
  height: 4px;
  margin-left: -4px;
  border-radius: 2px;
  background: #9a9a96;
}
.app.current { width: 50px; margin-left: 2px; border-radius: 4px; background: #33322a; box-shadow: inset 0 0 0 1px #3e3d36; }
.app.current::after { width: 20px; margin-left: -10px; background: #0a8cff; }
.search {
  display: flex;
  align-items: center;
  width: 273px;
  height: 38px;
  margin: 0 5px 0 4px;
  padding: 0 9px 0 14px;
  box-sizing: border-box;
  border-radius: 19px;
  background: #f3f3f2;
}
.search input {
  flex: 1;
  min-width: 0;
  margin: 0;
  padding: 0 0 0 11px;
  border: 0;
  background: none;
  font: 16px/24px "Open Sans", "Noto Sans", sans-serif;
  color: #555;
}
.search input::placeholder { color: #5c5c5c; opacity: 1; }
.tray { display: flex; align-items: center; justify-content: flex-end; padding-right: 27px; }
.status-group { display: flex; gap: 10px; margin: 0 25px 0 23px; }
.clock { display: flex; flex-direction: column; align-items: flex-end; margin-right: 11px; }
</style>
